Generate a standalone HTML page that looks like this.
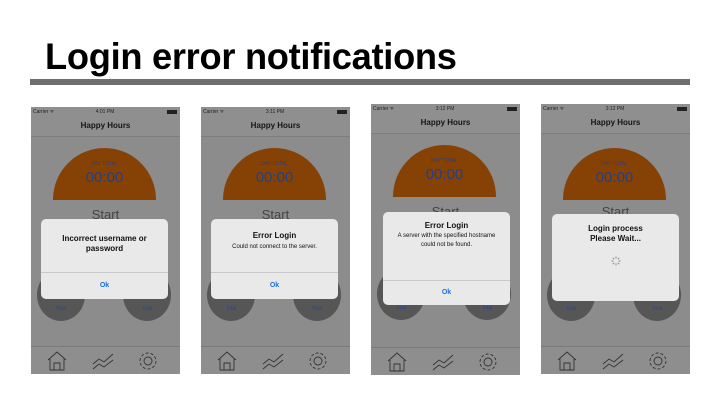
<!DOCTYPE html>
<html><head><meta charset="utf-8"><style>
*{margin:0;padding:0;box-sizing:border-box}
body{width:720px;height:405px;background:#fff;position:relative;overflow:hidden;font-family:"Liberation Sans",Arial,sans-serif}
.title{position:absolute;left:45px;top:36px;font-size:37px;font-weight:bold;color:#000;white-space:nowrap;transform:scaleX(0.98);transform-origin:0 0;letter-spacing:-0.3px}
.bar{position:absolute;left:30px;top:79px;width:660px;height:6px;background:#6e6e6e}
.ph{position:absolute;width:149px;height:267px;background:#8c8c8c;overflow:hidden}
.sb{position:absolute;top:2px;left:2px;right:3px;font-size:5px;color:#222;height:7px}
.sb .c{position:absolute;left:0}.sb .t{position:absolute;left:0;right:0;text-align:center}
.sb .b{position:absolute;right:0;top:1px;width:10px;height:4px;background:#222}
.nav{position:absolute;top:0;left:0;right:0;height:30px;border-bottom:1px solid #7e7e7e;background:#8f8f8f}
.nt{position:absolute;top:14px;left:0;right:0;text-align:center;font-size:8px;font-weight:bold;color:#151515}
.semi{position:absolute;left:22px;top:41px;width:103px;height:52px;background:#864205;border-radius:52px 52px 0 0}
.dt{position:absolute;left:22px;width:103px;top:54px;text-align:center;font-size:5px;color:#2b3d80}
.dn{position:absolute;left:22px;width:103px;top:62px;text-align:center;font-size:15px;color:#22408a}
.st{position:absolute;left:0;right:0;top:100px;text-align:center;font-size:13px;color:#444}
.cir{position:absolute;top:162px;width:48px;height:52px;border-radius:50%;background:#565656;color:#2848a0;text-align:center;font-size:5px}
.cir .a{position:absolute;top:7px;left:0;right:0}
.cir .n{position:absolute;top:21px;left:0;right:0;font-size:9px}
.cir .z{position:absolute;top:37px;left:0;right:0}
.tab{position:absolute;left:0;right:0;bottom:0;height:28px;border-top:1px solid #7a7a7a;background:#8e8e8e}
.alert{position:absolute;left:10px;width:127px;background:#e9e9e9;border-radius:5px;text-align:center;color:#111}
.alert .h{font-size:8px;font-weight:bold;line-height:10px}
.alert .m{font-size:6px;line-height:9px}
.alert .ok{position:absolute;left:0;right:0;bottom:0;border-top:1px solid #c8c8c8;color:#1b6fe6;font-weight:bold;font-size:7px}
</style></head><body>
<div class="title">Login error notifications</div>
<div class="bar"></div>

<div class="ph" style="left:31px;top:107px">
 <div class="nav"></div>
 <div class="sb"><span class="c">Carrier ᯤ</span><span class="t">4:01 PM</span><span class="b"></span></div>
 <div class="nt">Happy Hours</div>
 <div class="semi"></div><div class="dt">DAY TOTAL</div><div class="dn">00:00</div>
 <div class="st">Start</div>
 <div class="cir" style="left:6px"><div class="a">Week</div><div class="n">00:00</div><div class="z">Total</div></div>
 <div class="cir" style="left:92px"><div class="a">Month</div><div class="n">00:00</div><div class="z">Total</div></div>
 <div class="tab"><svg width="149" height="28" fill="none" stroke="#333" stroke-width="0.9"><path d="M17 13 L26 5 L35 13 M19 12 V23 H33 V12 M23 23 V16 H29 V23"/><path d="M62 17 L68 12 L73 15 L82 7 M62 22 L68 17 L73 20 L82 13"/><circle cx="117" cy="14" r="4"/><circle cx="117" cy="14" r="8" stroke-dasharray="3 2"/></svg></div>
 <div class="alert" style="top:112px;height:80px"><div class="h" style="padding-top:15px">Incorrect username or<br>password</div><div class="ok" style="height:27px;line-height:26px">Ok</div></div>
</div>

<div class="ph" style="left:201px;top:107px">
 <div class="nav"></div>
 <div class="sb"><span class="c">Carrier ᯤ</span><span class="t">3:11 PM</span><span class="b"></span></div>
 <div class="nt">Happy Hours</div>
 <div class="semi"></div><div class="dt">DAY TOTAL</div><div class="dn">00:00</div>
 <div class="st">Start</div>
 <div class="cir" style="left:6px"><div class="a">Week</div><div class="n">00:00</div><div class="z">Total</div></div>
 <div class="cir" style="left:92px"><div class="a">Month</div><div class="n">00:00</div><div class="z">Total</div></div>
 <div class="tab"><svg width="149" height="28" fill="none" stroke="#333" stroke-width="0.9"><path d="M17 13 L26 5 L35 13 M19 12 V23 H33 V12 M23 23 V16 H29 V23"/><path d="M62 17 L68 12 L73 15 L82 7 M62 22 L68 17 L73 20 L82 13"/><circle cx="117" cy="14" r="4"/><circle cx="117" cy="14" r="8" stroke-dasharray="3 2"/></svg></div>
 <div class="alert" style="top:112px;height:80px"><div class="h" style="padding-top:12px">Error Login</div><div class="m" style="margin-top:2px">Could not connect to the server.</div><div class="ok" style="height:27px;line-height:26px">Ok</div></div>
</div>

<div class="ph" style="left:371px;top:104px;height:271px">
 <div class="nav"></div>
 <div class="sb"><span class="c">Carrier ᯤ</span><span class="t">3:12 PM</span><span class="b"></span></div>
 <div class="nt">Happy Hours</div>
 <div class="semi"></div><div class="dt">DAY TOTAL</div><div class="dn">00:00</div>
 <div class="st">Start</div>
 <div class="cir" style="left:6px;top:164px"><div class="a">Week</div><div class="n">00:00</div><div class="z">Total</div></div>
 <div class="cir" style="left:92px;top:164px"><div class="a">Month</div><div class="n">00:00</div><div class="z">Total</div></div>
 <div class="tab"><svg width="149" height="28" fill="none" stroke="#333" stroke-width="0.9"><path d="M17 13 L26 5 L35 13 M19 12 V23 H33 V12 M23 23 V16 H29 V23"/><path d="M62 17 L68 12 L73 15 L82 7 M62 22 L68 17 L73 20 L82 13"/><circle cx="117" cy="14" r="4"/><circle cx="117" cy="14" r="8" stroke-dasharray="3 2"/></svg></div>
 <div class="alert" style="left:12px;top:108px;height:93px"><div class="h" style="padding-top:9px">Error Login</div><div class="m" style="margin-top:1px">A server with the specified hostname<br>could not be found.</div><div class="ok" style="height:25px;line-height:24px">Ok</div></div>
</div>

<div class="ph" style="left:541px;top:104px;height:270px">
 <div class="nav"></div>
 <div class="sb"><span class="c">Carrier ᯤ</span><span class="t">3:12 PM</span><span class="b"></span></div>
 <div class="nt">Happy Hours</div>
 <div class="semi" style="top:44px"></div><div class="dt" style="top:57px">DAY TOTAL</div><div class="dn" style="top:65px">00:00</div>
 <div class="st">Start</div>
 <div class="cir" style="left:6px;top:165px"><div class="a">Week</div><div class="n">00:00</div><div class="z">Total</div></div>
 <div class="cir" style="left:92px;top:165px"><div class="a">Month</div><div class="n">00:00</div><div class="z">Total</div></div>
 <div class="tab"><svg width="149" height="28" fill="none" stroke="#333" stroke-width="0.9"><path d="M17 13 L26 5 L35 13 M19 12 V23 H33 V12 M23 23 V16 H29 V23"/><path d="M62 17 L68 12 L73 15 L82 7 M62 22 L68 17 L73 20 L82 13"/><circle cx="117" cy="14" r="4"/><circle cx="117" cy="14" r="8" stroke-dasharray="3 2"/></svg></div>
 <div class="alert" style="left:11px;top:110px;height:87px"><div class="h" style="padding-top:10px">Login process<br>Please Wait...</div><svg width="10" height="10" style="margin-top:12px" stroke="#999" stroke-width="1.2"><g transform="translate(5 5)"><path d="M0 -4.5V-2.5M0 2.5V4.5M-4.5 0H-2.5M2.5 0H4.5M-3.2 -3.2L-1.8 -1.8M1.8 1.8L3.2 3.2M-3.2 3.2L-1.8 1.8M1.8 -1.8L3.2 -3.2"/></g></svg></div>
</div>
</body></html>
